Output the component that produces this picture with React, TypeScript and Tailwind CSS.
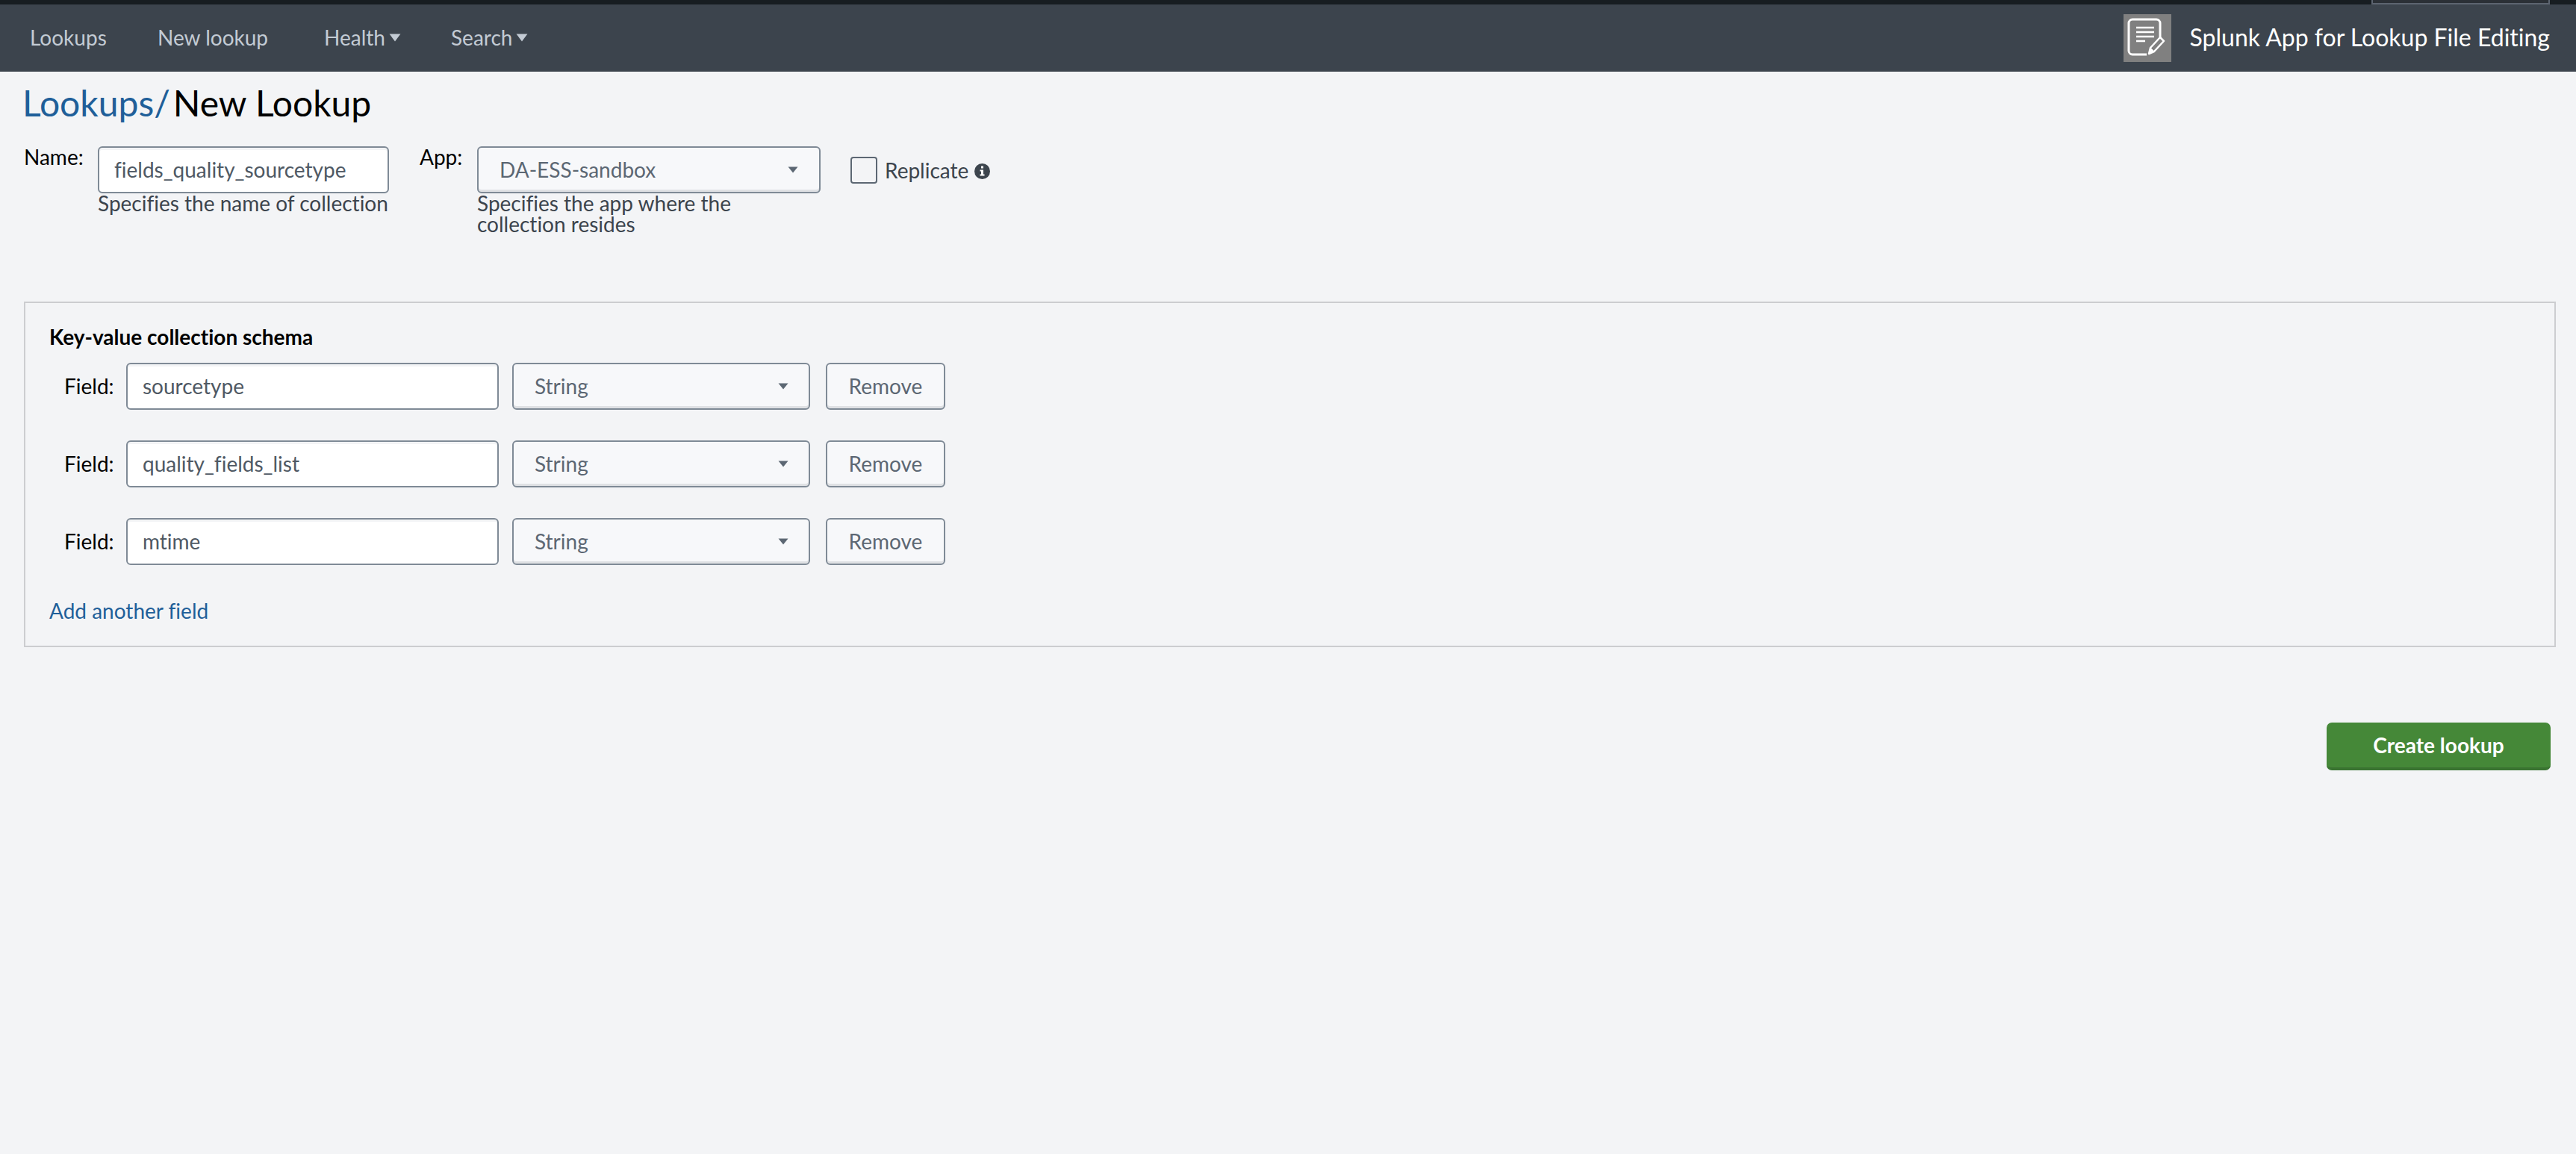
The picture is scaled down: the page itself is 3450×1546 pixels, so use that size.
import React from 'react';

const fields = ['sourcetype', 'quality_fields_list', 'mtime'];

const Caret = ({ className }: { className: string }) => (
  <svg viewBox="0 0 14 9" preserveAspectRatio="none" className={className}>
    <path d="M0.5 0.5h13L7 8.5z" fill="currentColor" />
  </svg>
);

const LookupIcon = () => (
  <div className="w-[64px] h-[64px] bg-[#808080]">
    <svg viewBox="0 0 64 64" className="w-[64px] h-[64px]" fill="none" stroke="#fff">
      <path d="M49 32V12a5 5 0 0 0-5-5H12a5 5 0 0 0-5 5v37a5 5 0 0 0 5 5h19" strokeWidth="3" />
      <path d="M17 18h24M17 24h24M17 30h24M17 36h12" strokeWidth="2.5" />
      <path d="M34 53l2-8 13-14 5 5-13 14z" strokeWidth="2.5" strokeLinejoin="round" />
      <path d="M34 53l2-8 5 5z" fill="#fff" strokeWidth="1" />
    </svg>
  </div>
);

const InfoIcon = () => (
  <svg viewBox="0 0 21 21" className="w-[21px] h-[21px] ml-[8px] mt-[2px]">
    <circle cx="10.5" cy="10.5" r="10.5" fill="#3c444d" />
    <path d="M9 3.5h3v3H9zM7.5 8.5h4.5v6h1.5v2h-6v-2H9v-4H7.5z" fill="#fff" />
  </svg>
);

const SelectBox = ({ label, className, padding }: { label: string; className: string; padding: string }) => (
  <button className={`flex items-center justify-between h-[63px] border-2 border-[#7f8a96] rounded-[6px] bg-[#f7f8fa] shadow-[inset_0_-3px_0_#dfe1e4] text-[#5c6773] text-[28px] ${padding} ${className}`}>
    <span className="pb-[2px]">{label}</span>
    <Caret className="w-[14px] h-[9px] text-[#5c6773]" />
  </button>
);

export default function App() {
  return (
    <div className="min-h-[1546px] bg-[#f3f4f6] font-['Lato',sans-serif] [font-variant-ligatures:none] text-black">
      {/* top strip */}
      <div className="h-[6px] bg-[#171d21] flex justify-end pr-[35px]">
        <div className="w-[239px] h-full bg-[#2b3036] border-x-2 border-b-2 border-[#5c6470]" />
      </div>

      {/* app bar */}
      <div className="h-[90px] bg-[#3c444d] flex items-center text-[#c3cbd4] text-[28px] pl-[40px] pr-[35px]">
        <span className="w-[171px] pb-[2px]">Lookups</span>
        <span className="w-[223px] pb-[2px]">New lookup</span>
        <span className="w-[170px] flex items-center gap-[5px] pb-[2px]">
          Health <Caret className="w-[16px] h-[11px]" />
        </span>
        <span className="flex items-center gap-[5px] pb-[2px]">
          Search <Caret className="w-[16px] h-[11px]" />
        </span>
        <div className="ml-auto flex items-center gap-[25px]">
          <LookupIcon />
          <span className="text-white text-[32px] pb-[2px]">Splunk App for Lookup File Editing</span>
        </div>
      </div>

      <div className="pl-[32px] pr-[27px]">
        <h1 className="text-[48px] leading-[56px] mt-[14px] -ml-[2px] flex gap-[4px]">
          <span className="text-[#1f5f99]">Lookups/</span>
          <span>New Lookup</span>
        </h1>

        {/* name / app row */}
        <div className="flex mt-[30px] h-[208px] text-[28px]">
          <span className="w-[99px] leading-[28px]">Name:</span>
          <div className="w-[390px]">
            <input
              readOnly
              value="fields_quality_sourcetype"
              className="w-full h-[63px] border-2 border-[#7f8a96] rounded-[6px] bg-white px-[20px] pb-[2px] text-[#4f5964] text-[28px] shadow-[inset_0_3px_0_#f3f4f6] outline-none"
            />
            <p className="-mt-[1px] text-[#3c444d] text-[28px] leading-[28px] whitespace-nowrap">Specifies the name of collection</p>
          </div>
          <span className="w-[77px] ml-[41px] leading-[28px]">App:</span>
          <div className="w-[460px]">
            <SelectBox label="DA-ESS-sandbox" className="w-full" padding="pl-[28px] pr-[28px]" />
            <p className="-mt-[1px] text-[#3c444d] text-[28px] leading-[28px] w-[400px]">
              Specifies the app where the collection resides
            </p>
          </div>
          <div className="flex items-center h-[36px] ml-[40px] mt-[14px] text-[#3c444d]">
            <span className="w-[36px] h-[36px] border-2 border-[#5c6773] rounded-[4px]" />
            <span className="ml-[10px]">Replicate</span>
            <InfoIcon />
          </div>
        </div>

        {/* schema panel */}
        <div className="h-[463px] border-2 border-[#cccdd0] pl-[32px] pt-[29px]">
          <h2 className="text-[28px] leading-[32px] font-bold">Key-value collection schema</h2>
          <div className="flex flex-col gap-[41px] mt-[19px]">
            {fields.map((field) => (
              <div key={field} className="flex items-center h-[63px]">
                <span className="w-[103px] pl-[20px] pb-[2px] text-[28px]">Field:</span>
                <input
                  readOnly
                  value={field}
                  className="w-[499px] h-[63px] border-2 border-[#7f8a96] rounded-[6px] bg-white px-[20px] pb-[2px] text-[#4f5964] text-[28px] shadow-[inset_0_3px_0_#f3f4f6] outline-none"
                />
                <SelectBox label="String" className="w-[399px] ml-[18px]" padding="pl-[28px] pr-[27px]" />
                <button className="w-[160px] h-[63px] ml-[21px] pb-[2px] border-2 border-[#7f8a96] rounded-[6px] bg-[#f7f8fa] shadow-[inset_0_-3px_0_#dfe1e4] text-[#5c6773] text-[28px]">
                  Remove
                </button>
              </div>
            ))}
          </div>
          <a className="block mt-[44px] text-[#1f5f99] text-[28px] leading-[34px]">Add another field</a>
        </div>

        <div className="flex justify-end mt-[101px] pr-[7px]">
          <button className="w-[300px] h-[64px] rounded-[7px] bg-[#458838] border-b-[4px] border-[#3a7431] text-white text-[28px] font-bold">
            Create lookup
          </button>
        </div>
      </div>
    </div>
  );
}
